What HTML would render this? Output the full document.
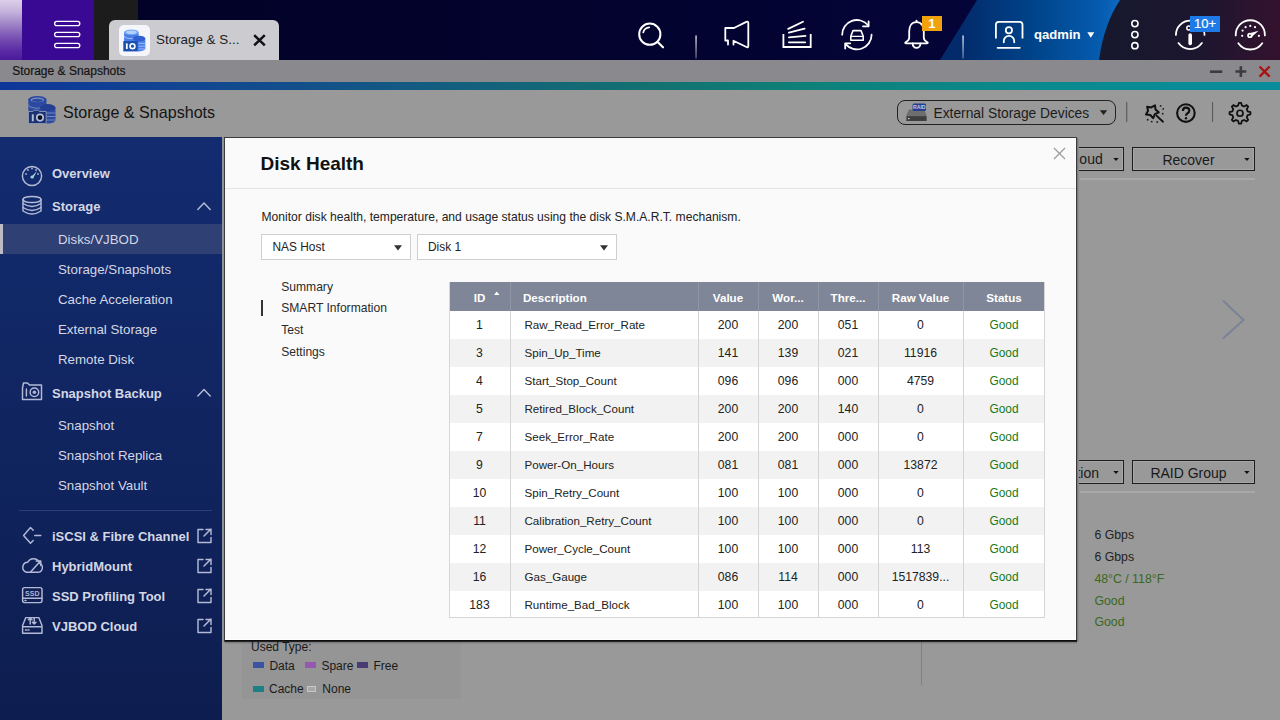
<!DOCTYPE html>
<html><head><meta charset="utf-8">
<style>
*{box-sizing:border-box;margin:0;padding:0}
html,body{width:1280px;height:720px;overflow:hidden}
body{position:relative;font-family:"Liberation Sans",sans-serif;background:#999}
.a{position:absolute;white-space:nowrap;line-height:1}
svg{position:absolute;overflow:visible}
</style></head><body>

<!-- ===== TOP BAR ===== -->
<div class="a" style="left:0;top:0;width:1280px;height:60px;background:linear-gradient(90deg,#020228 10%,#03032f 50%,#040438 75%)"></div>
<div class="a" style="left:0;top:0;width:22px;height:60px;background:linear-gradient(#dccfe8 0%,#c4b2dc 20%,#9c80c4 42%,#7a52b4 62%,#5a2aa4 85%,#4a1a9c 100%)"></div>
<div class="a" style="left:22px;top:0;width:72px;height:60px;background:#3a0994"></div>
<div class="a" style="left:94px;top:0;width:43.5px;height:60px;background:#1c1c1c"></div>
<svg style="left:0;top:0" width="1280" height="60">
  <defs>
    <linearGradient id="bb" x1="0" y1="0" x2="1" y2="0">
      <stop offset="0.1" stop-color="#032a6a"/><stop offset="0.5" stop-color="#00448a"/><stop offset="0.85" stop-color="#065cb0"/><stop offset="1" stop-color="#1272cc"/>
    </linearGradient>
    <linearGradient id="rb" x1="0" y1="0" x2="1" y2="0">
      <stop offset="0" stop-color="#16182e"/><stop offset="0.55" stop-color="#1c162e"/><stop offset="1" stop-color="#34122e"/>
    </linearGradient>
  </defs>
  <path d="M977 0 L1130 0 L1130 60 L940 60 Z" fill="url(#bb)"/>
  <path d="M1120 0 L1280 0 L1280 60 L1099 60 Q1104 24 1120 0 Z" fill="url(#rb)"/>
  <g fill="none" stroke="#fff" stroke-width="1.3">
    <rect x="54.6" y="21.4" width="25.2" height="4.3" rx="2.15"/>
    <rect x="54.6" y="32.4" width="25.2" height="4.3" rx="2.15"/>
    <rect x="54.6" y="43.4" width="25.2" height="4.3" rx="2.15"/>
  </g>
</svg>
<!-- tab -->
<div class="a" style="left:109px;top:20px;width:170px;height:40px;background:#cccbd0;border-radius:6px 6px 0 0"></div>
<div class="a" style="left:119px;top:25px;width:31px;height:31px;background:#f4f6fb;border-radius:5px"></div>
<svg style="left:0;top:0" width="300" height="60">
  <g transform="translate(123.3 29.4) scale(0.8)">
    <path d="M1 3.5 v10.5 a9.1 3.5 0 0 0 18.2 0 v-10.5 z" fill="#4a7ee6"/>
    <ellipse cx="10.1" cy="3.5" rx="9.1" ry="3.5" fill="#7aa6f6"/>
    <ellipse cx="10.1" cy="3.5" rx="6.5" ry="2.2" fill="#b4d0ff"/>
    <path d="M1 8 a9.1 3.5 0 0 0 18.2 0" fill="none" stroke="#a8c8ff" stroke-width="1.1"/>
    <path d="M12 11.5 v12.5 a7.75 3.5 0 0 0 15.5 0 v-12.5 z" fill="#4a7ee6"/>
    <ellipse cx="19.75" cy="11.5" rx="7.75" ry="3.5" fill="#2f5fd0"/>
    <path d="M19 17.5 h8.5 M19 21 h8.5 M19 24.5 h8.5" stroke="#9cc0ff" stroke-width="1.2"/>
    <rect x="0" y="14.5" width="18" height="13" fill="#1c50b0"/>
    <rect x="3.3" y="17.5" width="2.2" height="7" fill="#fff"/>
    <circle cx="11.5" cy="21" r="3" fill="none" stroke="#fff" stroke-width="2"/>
  </g>
</svg>
<div class="a" style="left:156px;top:33.2px;font-size:13.4px;color:#1e1e1e">Storage &amp; S...</div>
<svg style="left:0;top:0" width="300" height="60">
  <path d="M254.2 35.2 L264.8 45.3 M264.8 35.2 L254.2 45.3" stroke="#111" stroke-width="2.5"/>
</svg>
<svg style="left:0;top:0" width="1280" height="60">
<g fill="none" stroke="#fff" stroke-linecap="round" stroke-linejoin="round">
<circle cx="649.8" cy="34.2" r="10.6" stroke-width="2"/>
<path d="M657.6 42 L663 47.3" stroke-width="2.2"/>
<path d="M643.23 32.44 A6.80 6.80 0 0 1 649.21 27.43" stroke-width="1.7"/>
<path d="M728 44.5 V40.5 H725.3 V28 H734 L746.3 21.9 Q748.3 21.1 748.3 23.1 V45.9 Q748.3 47.9 746.4 47 L733.5 40.7 V44.5" stroke-width="1.8"/>
<path d="M783.4 34 V47 H810.7 V34" stroke-width="1.8" stroke-linecap="butt" stroke-linejoin="miter"/>
<path d="M788.9 42.3 H805.2 M788.9 37.3 L805.5 35.8 M788.9 32.7 L804.6 28.7 M788.2 28.9 L803 21.7" stroke-width="1.8"/>
<path d="M842.20 34.70 A14.70 14.70 0 0 1 868.16 25.25" stroke-width="1.8"/>
<path d="M868.6 21.4 V26.3 H863" stroke-width="1.8"/>
<path d="M871.60 34.70 A14.70 14.70 0 0 1 845.64 44.15" stroke-width="1.8"/>
<path d="M845.2 48.5 V43.3 H850.3" stroke-width="1.8"/>
<path d="M850.8 36.2 L853 30.6 H861 L863.2 36.2 V40.2 H850.8 Z" stroke-width="1.6"/>
<path d="M851 36.4 H863" stroke-width="1.4"/>
<path d="M916.5 22.2 C911.3 22.2 909.2 26.6 909.2 31 V37.8 Q909.2 40.4 905.6 42.2 Q904.6 43.3 906.2 43.3 H926.8 Q928.4 43.3 927.4 42.2 Q923.8 40.4 923.8 37.8 V31 C923.8 26.6 921.7 22.2 916.5 22.2 Z" stroke-width="1.8"/>
<path d="M912.6 43.5 A3.9 4.4 0 0 0 920.4 43.5" stroke-width="1.8"/>
<path d="M916.5 22 V20.6" stroke-width="1.8"/>
<path d="M995.9 38.5 V24.8 Q995.9 21.9 998.8 21.9 H1019.6 Q1022.5 21.9 1022.5 24.8 V38.5" stroke-width="1.8" stroke-linecap="butt"/>
<circle cx="1008.9" cy="30.3" r="3.1" stroke-width="1.8"/>
<path d="M1003.8 42.3 V41 A5.2 5.2 0 0 1 1014.2 41 V42.3" stroke-width="1.8"/>
<path d="M997.6 47.8 H1019.8" stroke-width="1.8"/>
<circle cx="1134.9" cy="23.6" r="3.1" stroke-width="1.6"/>
<circle cx="1134.9" cy="34.6" r="3.1" stroke-width="1.6"/>
<circle cx="1134.9" cy="45.7" r="3.1" stroke-width="1.6"/>
<path d="M1175.90 34.90 A14.30 14.30 0 0 1 1190.20 20.60" stroke-width="1.8"/>
<path d="M1203.64 30.01 A14.30 14.30 0 0 1 1204.50 34.90" stroke-width="1.8"/>
<path d="M1201.91 43.10 A14.30 14.30 0 0 1 1178.49 43.10" stroke-width="1.8"/>
<path d="M1190.2 35 V43.5" stroke-width="3.6"/>
<circle cx="1188.8" cy="28" r="2" stroke-width="1.5"/>
<path d="M1235.71 35.41 A14.60 14.60 0 1 1 1264.89 35.41" stroke-width="1.8"/>
<path d="M1262.26 43.27 A14.60 14.60 0 0 1 1238.34 43.27" stroke-width="1.8"/>
</g>
<g fill="#fff">
 <circle cx="1242.6" cy="30.6" r="1.1"/><circle cx="1245.6" cy="27.2" r="1.1"/><circle cx="1250.3" cy="25.9" r="1.1"/><circle cx="1255" cy="27.2" r="1.1"/><circle cx="1242.2" cy="35.8" r="1.1"/><circle cx="1258.9" cy="35.8" r="1.1"/>
 <path d="M1248.6 33.6 L1258.6 30.8 L1251.4 37.2 Z"/><circle cx="1249.9" cy="35.4" r="2.7"/>
</g>
<circle cx="1249.9" cy="35.4" r="0.9" fill="#1c162e"/>
<defs><linearGradient id="sep" x1="0" y1="0" x2="0" y2="1"><stop offset="0" stop-color="#fff" stop-opacity="0.95"/><stop offset="1" stop-color="#fff" stop-opacity="0.35"/></linearGradient></defs>
<rect x="695.4" y="35.5" width="1.3" height="23" fill="url(#sep)"/>
<rect x="962.4" y="35.5" width="1.3" height="23" fill="url(#sep)"/>
<path d="M1087.3 32.2 H1094.3 L1090.8 37.8 Z" fill="#fff"/>
</svg>
<div class="a" style="left:922px;top:16px;width:19.5px;height:15px;background:#f2a20c"></div>
<div class="a" style="left:922px;width:19.5px;text-align:center;top:17.2px;font-size:13px;font-weight:bold;color:#fff">1</div>
<div class="a" style="left:1190.2px;top:16px;width:29.6px;height:15.5px;background:#1e7ae6"></div>
<div class="a" style="left:1190.2px;width:29.6px;text-align:center;top:16.8px;font-size:13px;color:#fff;-webkit-text-stroke:0.2px #fff">10+</div>
<div class="a" style="left:1034px;top:28.3px;font-size:13.1px;font-weight:bold;color:#fff">qadmin</div>
<!-- ===== TITLE BAR ===== -->
<div class="a" style="left:0;top:60px;width:1280px;height:21.5px;background:#8a898d"></div>
<div class="a" style="left:12.2px;top:65.2px;font-size:12px;color:#141414;-webkit-text-stroke:0.2px #141414">Storage &amp; Snapshots</div>
<svg style="left:0;top:60px" width="1280" height="22">
  <path d="M1210 11.7 h12.3" stroke="#3c3c3c" stroke-width="2.6"/>
  <path d="M1235.4 11.5 h10.9 M1240.85 6.3 v10.6" stroke="#3c3c3c" stroke-width="2.6"/>
  <path d="M1259.6 6.5 l10 10.2 M1269.6 6.5 l-10 10.2" stroke="#a81414" stroke-width="2.4"/>
</svg>
<div class="a" style="left:0;top:81.5px;width:1280px;height:8.5px;background:linear-gradient(90deg,#0e369a 0%,#134e8c 22%,#137070 50%,#0e8078 62%,#0a8a8e 82%,#0a8c9c 100%)"></div>
<!-- ===== HEADER ===== -->
<div class="a" style="left:0;top:90px;width:1280px;height:47px;background:#999"></div>
<svg style="left:0;top:0" width="300" height="140">
  <g transform="translate(28 96)">
    <path d="M0.3 3.6 v10.5 a9.1 3.6 0 0 0 18.2 0 v-10.5 z" fill="#2c4aa2"/>
    <ellipse cx="9.4" cy="3.6" rx="9.1" ry="3.6" fill="#2c4aa2"/>
    <ellipse cx="9.4" cy="3.9" rx="6.6" ry="2.3" fill="#7d8fba"/>
    <ellipse cx="9.4" cy="4.3" rx="5.4" ry="1.6" fill="#2c4aa2"/>
    <path d="M0.3 8.6 a9.1 3.6 0 0 0 18.2 0" fill="none" stroke="#7d8fba" stroke-width="0.9"/>
    <path d="M12 11.6 v12.4 a7.75 3.5 0 0 0 15.5 0 v-12.4 z" fill="#2c4aa2"/>
    <ellipse cx="19.75" cy="11.6" rx="7.75" ry="3.5" fill="#243e94"/>
    <path d="M18.5 17 h9 M18.5 20.5 h9 M18.5 24 h9" stroke="#7386b6" stroke-width="1.2"/>
    <path d="M0.5 15.5 h4.5 l1.2 -1.2 h4 l1.2 1.2 h6.8 v12 h-17.7 z" fill="#1b3172" stroke="#8d98b8" stroke-width="0.9"/>
    <rect x="3.8" y="18.3" width="2" height="7" fill="#b3bdd6"/>
    <circle cx="12" cy="21.6" r="3.2" fill="#0c1020" stroke="#b3bdd6" stroke-width="1.7"/>
  </g>
</svg>
<div class="a" style="left:63px;top:103.8px;font-size:16.1px;color:#141414">Storage &amp; Snapshots</div>
<div class="a" style="left:897px;top:99.5px;width:219px;height:25.5px;border:1.8px solid #222;border-radius:8px"></div>
<svg style="left:906px;top:103px" width="21" height="19">
  <path d="M3 6.5 h15 l2.5 5.5 v6 h-20 v-6 z" fill="#6e6e6e"/>
  <rect x="0.5" y="13.2" width="20" height="4.8" fill="#3e3e3e"/>
  <rect x="2" y="15" width="1.6" height="1.2" fill="#c8c8c8"/>
  <rect x="6.5" y="0.5" width="13.5" height="7.5" rx="1.5" fill="#24408c"/>
  <text x="13.25" y="6.2" font-size="5.2" font-family="Liberation Sans" fill="#c4cce4" text-anchor="middle" font-weight="bold">RAID</text>
</svg>
<div class="a" style="left:933.5px;top:106.6px;font-size:13.8px;color:#1c1c1c">External Storage Devices</div>
<svg style="left:0;top:0" width="1280" height="140">
  <path d="M1099.8 110.2 h7.5 l-3.75 4.8 z" fill="#222"/>
  <rect x="1126.2" y="102" width="1.1" height="20" fill="#5a5a5a"/>
  <rect x="1212" y="102" width="1.1" height="20" fill="#5a5a5a"/>
  <circle cx="1185.9" cy="113.1" r="8.8" fill="none" stroke="#111" stroke-width="2.1"/>
  <path d="M1182.9 110.9 Q1182.9 107.7 1186 107.7 Q1189.3 107.7 1189.3 110.5 Q1189.3 112.3 1187.5 113.2 Q1186 114 1186 115.8" fill="none" stroke="#111" stroke-width="2.2"/>
  <circle cx="1186" cy="118.3" r="1.2" fill="#111"/>
  <path d="M1158.73 112.35 L1154.88 114.18 L1153.18 118.10 L1150.25 115.00 L1146.00 114.59 L1148.04 110.84 L1147.11 106.68 L1151.31 107.46 L1154.98 105.29 L1155.53 109.52 Z" fill="none" stroke="#111" stroke-width="2" stroke-linejoin="round"/>
  <path d="M1156.5 115.6 L1163 121.7" stroke="#111" stroke-width="1.9" stroke-linecap="round"/>
  <g fill="#222"><circle cx="1160.6" cy="105.9" r="0.95"/><circle cx="1163.2" cy="108.9" r="0.95"/><circle cx="1162.7" cy="113.8" r="0.95"/><circle cx="1147.7" cy="119.7" r="0.95"/><circle cx="1151.7" cy="121.6" r="0.95"/><circle cx="1157.3" cy="122" r="0.95"/></g>
  <path d="M1238.09 105.58 L1238.90 102.81 L1241.10 102.81 L1241.91 105.58 L1244.07 106.48 L1246.61 105.09 L1248.16 106.64 L1246.77 109.18 L1247.67 111.34 L1250.44 112.15 L1250.44 114.35 L1247.67 115.16 L1246.77 117.32 L1248.16 119.86 L1246.61 121.41 L1244.07 120.02 L1241.91 120.92 L1241.10 123.69 L1238.90 123.69 L1238.09 120.92 L1235.93 120.02 L1233.39 121.41 L1231.84 119.86 L1233.23 117.32 L1232.33 115.16 L1229.56 114.35 L1229.56 112.15 L1232.33 111.34 L1233.23 109.18 L1231.84 106.64 L1233.39 105.09 L1235.93 106.48 Z" fill="none" stroke="#111" stroke-width="1.8" stroke-linejoin="round"/>
  <circle cx="1240" cy="113.25" r="3" fill="none" stroke="#111" stroke-width="1.7"/>
</svg>
<!-- ===== SIDEBAR ===== -->
<div class="a" style="left:0;top:137px;width:222px;height:583px;background:linear-gradient(#132c70,#0d1d4f)"></div>
<div class="a" style="left:0;top:224px;width:222px;height:30px;background:#2e4074"></div>
<div class="a" style="left:0;top:224px;width:2.5px;height:30px;background:#bcbcc4"></div>

<!-- sidebar items -->
<div class="a" style="left:19px;top:510px;width:193px;height:1px;background:#2e3d7a"></div>
<svg style="left:0;top:0" width="222" height="720">
 <g fill="none" stroke="#b4bad6" stroke-width="1.45" stroke-linecap="round" stroke-linejoin="round">
  <circle cx="32" cy="176" r="9.6"/>
  <path d="M197.8 209.5 l6.2 -6.6 l6.2 6.6"/>
  <path d="M197.8 396 l6.2 -6.6 l6.2 6.6"/>
  <ellipse cx="32" cy="199.5" rx="9" ry="3"/>
  <path d="M23 199.5 v11.5 q9 6 18 0 v-11.5"/>
  <path d="M23 203.5 q9 6 18 0 M23 207.5 q9 6 18 0"/>
  <path d="M22.5 388 v11.5 h19 v-14.5 h-12 l-2 -2 h-4 z"/>
  <path d="M26.4 389 v7"/>
  <circle cx="34.4" cy="392.3" r="4.3"/>
  <path d="M33.2 530.2 L30.5 527.5 L23.6 535.4 L30.5 543.3 L33.2 540.6 M34.8 535.4 H40.8"/>
  <path d="M26.5 572.2 H37.8 A4.6 4.6 0 0 0 39.6 563.4 A6.4 6.4 0 0 0 27.8 562.2 A5.1 5.1 0 0 0 26.5 572.2 Z"/>
  <path d="M31 571.5 L40.5 561 M36.2 561 H40.8 V565.5"/>
  <rect x="22.6" y="587.6" width="19.4" height="15" rx="2"/>
  <path d="M22.6 598.2 H42 M25 600.5 h1"/>
  <path d="M22.6 625.5 L25.8 617.6 H38.8 L42 625.5 V633.2 H22.6 Z M22.6 626.8 H42"/>
  <path d="M30.2 624 V618 M28.4 619.8 L30.2 618 L32 619.8 M34.2 618 V624 M32.4 622.2 L34.2 624 L36 622.2"/>
  <path d="M25.5 630 h1 M28 630 h1"/>
  <path d="M203 529.5 h-5 v13 h13 v-5 M204 536 l7 -7 M206 529.5 h5 v5"/>
  <path d="M203 559.5 h-5 v13 h13 v-5 M204 566 l7 -7 M206 559.5 h5 v5"/>
  <path d="M203 589.5 h-5 v13 h13 v-5 M204 596 l7 -7 M206 589.5 h5 v5"/>
  <path d="M203 619.5 h-5 v13 h13 v-5 M204 626 l7 -7 M206 619.5 h5 v5"/>
 </g>
 <g fill="#aeb4d2">
  <circle cx="34.4" cy="392.3" r="1.8"/>
  <circle cx="26" cy="174" r="0.9"/><circle cx="28" cy="170" r="0.9"/><circle cx="32" cy="168.5" r="0.9"/><circle cx="36" cy="170" r="0.9"/><circle cx="38" cy="174" r="0.9"/>
  <path d="M31 177 l6 -6 l-4 7.5 z" fill="#9ed0d8"/>
  <circle cx="32" cy="177" r="1.6" fill="#9ed0d8"/>
  <text x="32.3" y="596" font-size="7" font-family="Liberation Sans" font-weight="bold" text-anchor="middle" fill="#aeb4d2">SSD</text>
 </g>
</svg>
<div class="a" style="left:52px;top:166.50px;font-size:13px;color:#d4d7e4;font-weight:bold;">Overview</div>
<div class="a" style="left:52px;top:199.80px;font-size:13px;color:#d4d7e4;font-weight:bold;">Storage</div>
<div class="a" style="left:52px;top:386.70px;font-size:13px;color:#d4d7e4;font-weight:bold;">Snapshot Backup</div>
<div class="a" style="left:58px;top:232.94px;font-size:13.3px;color:#d4d7e4;">Disks/VJBOD</div>
<div class="a" style="left:58px;top:263.24px;font-size:13.3px;color:#d4d7e4;">Storage/Snapshots</div>
<div class="a" style="left:58px;top:293.24px;font-size:13.3px;color:#d4d7e4;">Cache Acceleration</div>
<div class="a" style="left:58px;top:323.14px;font-size:13.3px;color:#d4d7e4;">External Storage</div>
<div class="a" style="left:58px;top:353.04px;font-size:13.3px;color:#d4d7e4;">Remote Disk</div>
<div class="a" style="left:58px;top:419.04px;font-size:13.3px;color:#d4d7e4;">Snapshot</div>
<div class="a" style="left:58px;top:448.94px;font-size:13.3px;color:#d4d7e4;">Snapshot Replica</div>
<div class="a" style="left:58px;top:479.04px;font-size:13.3px;color:#d4d7e4;">Snapshot Vault</div>
<div class="a" style="left:52px;top:529.70px;font-size:13px;color:#d4d7e4;font-weight:bold;">iSCSI &amp; Fibre Channel</div>
<div class="a" style="left:52px;top:560.00px;font-size:13px;color:#d4d7e4;font-weight:bold;">HybridMount</div>
<div class="a" style="left:52px;top:590.00px;font-size:13px;color:#d4d7e4;font-weight:bold;">SSD Profiling Tool</div>
<div class="a" style="left:52px;top:619.80px;font-size:13px;color:#d4d7e4;font-weight:bold;">VJBOD Cloud</div>
<!-- main bg -->
<div class="a" style="left:222px;top:137px;width:3px;height:504px;background:#8e9299;"></div>
<div class="a" style="left:1030px;top:147px;width:94px;height:24px;background:transparent;border:1.5px solid #1c1c1c;box-shadow:inset 0 0 0 1px rgba(255,255,255,0.14)"></div>
<div class="a" style="left:1132px;top:147px;width:123px;height:24px;background:transparent;border:1.5px solid #1c1c1c;box-shadow:inset 0 0 0 1px rgba(255,255,255,0.14)"></div>
<div class="a" style="left:1000px;width:102px;text-align:right;top:152.35px;font-size:14px;color:#1a1a1a">Backup to Cloud</div>
<div class="a" style="left:1132px;width:113px;text-align:center;top:152.55px;font-size:14px;color:#1a1a1a;">Recover</div>
<div class="a" style="left:1080px;top:178px;width:175px;height:2px;background:#a8a8a8;"></div>
<div class="a" style="left:1030px;top:460px;width:94px;height:24px;background:transparent;border:1.5px solid #1c1c1c;box-shadow:inset 0 0 0 1px rgba(255,255,255,0.14)"></div>
<div class="a" style="left:1132px;top:460px;width:123px;height:24px;background:transparent;border:1.5px solid #1c1c1c;box-shadow:inset 0 0 0 1px rgba(255,255,255,0.14)"></div>
<div class="a" style="left:990px;width:109px;text-align:right;top:465.55px;font-size:14px;color:#1a1a1a">Information</div>
<div class="a" style="left:1132px;width:113px;text-align:center;top:465.55px;font-size:14px;color:#1a1a1a;">RAID Group</div>
<div class="a" style="left:1080px;top:491px;width:175px;height:2px;background:#a8a8a8;"></div>
<svg style="left:0;top:0" width="1280" height="720"><path d="M1113.3 158 h5.4 l-2.7 3 z M1244.2 158 h5.4 l-2.7 3 z M1113.3 471 h5.4 l-2.7 3 z M1244.2 471 h5.4 l-2.7 3 z" fill="#111"/>
<path d="M1223 300.5 l20.5 19.5 l-20.5 18.5" fill="none" stroke="#7a8296" stroke-width="2"/></svg>
<div class="a" style="left:1094.4px;top:528.79px;font-size:12.3px;color:#1f1f1f;">6 Gbps</div>
<div class="a" style="left:1094.4px;top:550.89px;font-size:12.3px;color:#1f1f1f;">6 Gbps</div>
<div class="a" style="left:1094.4px;top:572.79px;font-size:12.3px;color:#3a6820;">48°C / 118°F</div>
<div class="a" style="left:1094.4px;top:594.79px;font-size:12.3px;color:#3a6820;">Good</div>
<div class="a" style="left:1094.4px;top:616.49px;font-size:12.3px;color:#3a6820;">Good</div>
<div class="a" style="left:921px;top:640px;width:1px;height:45px;background:#808080;"></div>
<div class="a" style="left:242px;top:630px;width:219px;height:69px;background:#959595;"></div>
<div class="a" style="left:251px;top:640.64px;font-size:12px;color:#1a1a1a;">Used Type:</div>
<div class="a" style="left:253px;top:662px;width:10.5px;height:6px;background:#3c52a2;"></div>
<div class="a" style="left:305px;top:662px;width:10.5px;height:6px;background:#9458b0;"></div>
<div class="a" style="left:357px;top:662px;width:10.5px;height:6px;background:#4a3c72;"></div>
<div class="a" style="left:253px;top:686px;width:10.5px;height:6px;background:#1e8084;"></div>
<div class="a" style="left:306.5px;top:686px;width:9.5px;height:6px;background:#b5b5b5;border:1px solid #c8c8c8;background:#a8a8a8"></div>
<div class="a" style="left:269.4px;top:659.54px;font-size:12px;color:#1a1a1a;">Data</div>
<div class="a" style="left:321.4px;top:659.54px;font-size:12px;color:#1a1a1a;">Spare</div>
<div class="a" style="left:373.5px;top:659.54px;font-size:12px;color:#1a1a1a;">Free</div>
<div class="a" style="left:269px;top:683.34px;font-size:12px;color:#1a1a1a;">Cache</div>
<div class="a" style="left:322.3px;top:683.34px;font-size:12px;color:#1a1a1a;">None</div>
<!-- dialog -->
<div class="a" style="left:224px;top:137px;width:853px;height:505px;background:#3a3a3a;"></div>
<div class="a" style="left:225px;top:641px;width:852px;height:1px;background:rgba(0,0,0,0.38);"></div>
<div class="a" style="left:225px;top:642px;width:852px;height:1px;background:rgba(0,0,0,0.18);"></div>
<div class="a" style="left:225px;top:643px;width:852px;height:1px;background:rgba(0,0,0,0.07);"></div>
<div class="a" style="left:1077px;top:138px;width:1px;height:504px;background:#7a7a7a;"></div>
<div class="a" style="left:1078px;top:138px;width:1px;height:504px;background:#8e8e8e;"></div>
<div class="a" style="left:225px;top:640px;width:852px;height:1px;background:#0e0e0e;"></div>
<div class="a" style="left:225px;top:138px;width:851px;height:502px;background:#fafafa;border:1px solid #fff;border-top:none;border-left:none"></div>
<div class="a" style="left:225px;top:188px;width:851px;height:1px;background:#e4e4e4;"></div>
<div class="a" style="left:260.5px;top:154.32px;font-size:19px;color:#111;font-weight:bold;">Disk Health</div>
<svg style="left:0;top:0" width="1280" height="720"><path d="M1054 148 l11 11 M1065 148 l-11 11" stroke="#9a9a9a" stroke-width="1.2"/></svg>
<div class="a" style="left:261.5px;top:210.56px;font-size:12.1px;color:#222;">Monitor disk health, temperature, and usage status using the disk S.M.A.R.T. mechanism.</div>
<div class="a" style="left:261px;top:234px;width:150px;height:26px;background:#fff;border:1px solid #cfcfcf"></div>
<div class="a" style="left:417px;top:234px;width:200px;height:26px;background:#fff;border:1px solid #cfcfcf"></div>
<div class="a" style="left:272.5px;top:242.33px;font-size:11.9px;color:#222;">NAS Host</div>
<div class="a" style="left:428px;top:242.33px;font-size:11.9px;color:#222;">Disk 1</div>
<svg style="left:0;top:0" width="1280" height="720"><path d="M394 245.3 h8 l-4 5.3 z M600 245.3 h8 l-4 5.3 z" fill="#333"/></svg>
<div class="a" style="left:281.2px;top:280.56px;font-size:12.1px;color:#2a2a2a;">Summary</div>
<div class="a" style="left:281.2px;top:302.26px;font-size:12.1px;color:#2a2a2a;">SMART Information</div>
<div class="a" style="left:281.2px;top:324.36px;font-size:12.1px;color:#2a2a2a;">Test</div>
<div class="a" style="left:281.2px;top:346.06px;font-size:12.1px;color:#2a2a2a;">Settings</div>
<div class="a" style="left:261px;top:300px;width:2px;height:16px;background:#333;"></div>
<div class="a" style="left:449px;top:282px;width:596px;height:336px;background:#fff;border:1px solid #d6d6d6"></div>
<div class="a" style="left:450px;top:282px;width:594px;height:29px;background:#7f8697;"></div>
<div class="a" style="left:449px;width:61px;text-align:center;top:291.68px;font-size:11.6px;color:#fff;font-weight:bold;">ID</div>
<div class="a" style="left:523px;top:291.68px;font-size:11.6px;color:#fff;font-weight:bold;">Description</div>
<div class="a" style="left:698px;width:60px;text-align:center;top:291.68px;font-size:11.6px;color:#fff;font-weight:bold;">Value</div>
<div class="a" style="left:758px;width:60px;text-align:center;top:291.68px;font-size:11.6px;color:#fff;font-weight:bold;">Wor...</div>
<div class="a" style="left:818px;width:60px;text-align:center;top:291.68px;font-size:11.6px;color:#fff;font-weight:bold;">Thre...</div>
<div class="a" style="left:878px;width:85px;text-align:center;top:291.68px;font-size:11.6px;color:#fff;font-weight:bold;">Raw Value</div>
<div class="a" style="left:963px;width:82px;text-align:center;top:291.68px;font-size:11.6px;color:#fff;font-weight:bold;">Status</div>
<div class="a" style="left:449px;width:61px;text-align:center;top:319.27px;font-size:12.2px;color:#222;">1</div>
<div class="a" style="left:524.5px;top:318.78px;font-size:11.6px;color:#222;">Raw_Read_Error_Rate</div>
<div class="a" style="left:698px;width:60px;text-align:center;top:319.27px;font-size:12.2px;color:#222;">200</div>
<div class="a" style="left:758px;width:60px;text-align:center;top:319.27px;font-size:12.2px;color:#222;">200</div>
<div class="a" style="left:818px;width:60px;text-align:center;top:319.27px;font-size:12.2px;color:#222;">051</div>
<div class="a" style="left:878px;width:85px;text-align:center;top:319.27px;font-size:12.2px;color:#222;">0</div>
<div class="a" style="left:963px;width:82px;text-align:center;top:319.53px;font-size:11.9px;color:#177a17;">Good</div>
<div class="a" style="left:450px;top:339px;width:594px;height:28px;background:#f2f2f2;"></div>
<div class="a" style="left:449px;width:61px;text-align:center;top:347.27px;font-size:12.2px;color:#222;">3</div>
<div class="a" style="left:524.5px;top:346.78px;font-size:11.6px;color:#222;">Spin_Up_Time</div>
<div class="a" style="left:698px;width:60px;text-align:center;top:347.27px;font-size:12.2px;color:#222;">141</div>
<div class="a" style="left:758px;width:60px;text-align:center;top:347.27px;font-size:12.2px;color:#222;">139</div>
<div class="a" style="left:818px;width:60px;text-align:center;top:347.27px;font-size:12.2px;color:#222;">021</div>
<div class="a" style="left:878px;width:85px;text-align:center;top:347.27px;font-size:12.2px;color:#222;">11916</div>
<div class="a" style="left:963px;width:82px;text-align:center;top:347.53px;font-size:11.9px;color:#177a17;">Good</div>
<div class="a" style="left:449px;width:61px;text-align:center;top:375.27px;font-size:12.2px;color:#222;">4</div>
<div class="a" style="left:524.5px;top:374.78px;font-size:11.6px;color:#222;">Start_Stop_Count</div>
<div class="a" style="left:698px;width:60px;text-align:center;top:375.27px;font-size:12.2px;color:#222;">096</div>
<div class="a" style="left:758px;width:60px;text-align:center;top:375.27px;font-size:12.2px;color:#222;">096</div>
<div class="a" style="left:818px;width:60px;text-align:center;top:375.27px;font-size:12.2px;color:#222;">000</div>
<div class="a" style="left:878px;width:85px;text-align:center;top:375.27px;font-size:12.2px;color:#222;">4759</div>
<div class="a" style="left:963px;width:82px;text-align:center;top:375.53px;font-size:11.9px;color:#177a17;">Good</div>
<div class="a" style="left:450px;top:395px;width:594px;height:28px;background:#f2f2f2;"></div>
<div class="a" style="left:449px;width:61px;text-align:center;top:403.27px;font-size:12.2px;color:#222;">5</div>
<div class="a" style="left:524.5px;top:402.78px;font-size:11.6px;color:#222;">Retired_Block_Count</div>
<div class="a" style="left:698px;width:60px;text-align:center;top:403.27px;font-size:12.2px;color:#222;">200</div>
<div class="a" style="left:758px;width:60px;text-align:center;top:403.27px;font-size:12.2px;color:#222;">200</div>
<div class="a" style="left:818px;width:60px;text-align:center;top:403.27px;font-size:12.2px;color:#222;">140</div>
<div class="a" style="left:878px;width:85px;text-align:center;top:403.27px;font-size:12.2px;color:#222;">0</div>
<div class="a" style="left:963px;width:82px;text-align:center;top:403.53px;font-size:11.9px;color:#177a17;">Good</div>
<div class="a" style="left:449px;width:61px;text-align:center;top:431.27px;font-size:12.2px;color:#222;">7</div>
<div class="a" style="left:524.5px;top:430.78px;font-size:11.6px;color:#222;">Seek_Error_Rate</div>
<div class="a" style="left:698px;width:60px;text-align:center;top:431.27px;font-size:12.2px;color:#222;">200</div>
<div class="a" style="left:758px;width:60px;text-align:center;top:431.27px;font-size:12.2px;color:#222;">200</div>
<div class="a" style="left:818px;width:60px;text-align:center;top:431.27px;font-size:12.2px;color:#222;">000</div>
<div class="a" style="left:878px;width:85px;text-align:center;top:431.27px;font-size:12.2px;color:#222;">0</div>
<div class="a" style="left:963px;width:82px;text-align:center;top:431.53px;font-size:11.9px;color:#177a17;">Good</div>
<div class="a" style="left:450px;top:451px;width:594px;height:28px;background:#f2f2f2;"></div>
<div class="a" style="left:449px;width:61px;text-align:center;top:459.27px;font-size:12.2px;color:#222;">9</div>
<div class="a" style="left:524.5px;top:458.78px;font-size:11.6px;color:#222;">Power-On_Hours</div>
<div class="a" style="left:698px;width:60px;text-align:center;top:459.27px;font-size:12.2px;color:#222;">081</div>
<div class="a" style="left:758px;width:60px;text-align:center;top:459.27px;font-size:12.2px;color:#222;">081</div>
<div class="a" style="left:818px;width:60px;text-align:center;top:459.27px;font-size:12.2px;color:#222;">000</div>
<div class="a" style="left:878px;width:85px;text-align:center;top:459.27px;font-size:12.2px;color:#222;">13872</div>
<div class="a" style="left:963px;width:82px;text-align:center;top:459.53px;font-size:11.9px;color:#177a17;">Good</div>
<div class="a" style="left:449px;width:61px;text-align:center;top:487.27px;font-size:12.2px;color:#222;">10</div>
<div class="a" style="left:524.5px;top:486.78px;font-size:11.6px;color:#222;">Spin_Retry_Count</div>
<div class="a" style="left:698px;width:60px;text-align:center;top:487.27px;font-size:12.2px;color:#222;">100</div>
<div class="a" style="left:758px;width:60px;text-align:center;top:487.27px;font-size:12.2px;color:#222;">100</div>
<div class="a" style="left:818px;width:60px;text-align:center;top:487.27px;font-size:12.2px;color:#222;">000</div>
<div class="a" style="left:878px;width:85px;text-align:center;top:487.27px;font-size:12.2px;color:#222;">0</div>
<div class="a" style="left:963px;width:82px;text-align:center;top:487.53px;font-size:11.9px;color:#177a17;">Good</div>
<div class="a" style="left:450px;top:507px;width:594px;height:28px;background:#f2f2f2;"></div>
<div class="a" style="left:449px;width:61px;text-align:center;top:515.27px;font-size:12.2px;color:#222;">11</div>
<div class="a" style="left:524.5px;top:514.78px;font-size:11.6px;color:#222;">Calibration_Retry_Count</div>
<div class="a" style="left:698px;width:60px;text-align:center;top:515.27px;font-size:12.2px;color:#222;">100</div>
<div class="a" style="left:758px;width:60px;text-align:center;top:515.27px;font-size:12.2px;color:#222;">100</div>
<div class="a" style="left:818px;width:60px;text-align:center;top:515.27px;font-size:12.2px;color:#222;">000</div>
<div class="a" style="left:878px;width:85px;text-align:center;top:515.27px;font-size:12.2px;color:#222;">0</div>
<div class="a" style="left:963px;width:82px;text-align:center;top:515.53px;font-size:11.9px;color:#177a17;">Good</div>
<div class="a" style="left:449px;width:61px;text-align:center;top:543.27px;font-size:12.2px;color:#222;">12</div>
<div class="a" style="left:524.5px;top:542.78px;font-size:11.6px;color:#222;">Power_Cycle_Count</div>
<div class="a" style="left:698px;width:60px;text-align:center;top:543.27px;font-size:12.2px;color:#222;">100</div>
<div class="a" style="left:758px;width:60px;text-align:center;top:543.27px;font-size:12.2px;color:#222;">100</div>
<div class="a" style="left:818px;width:60px;text-align:center;top:543.27px;font-size:12.2px;color:#222;">000</div>
<div class="a" style="left:878px;width:85px;text-align:center;top:543.27px;font-size:12.2px;color:#222;">113</div>
<div class="a" style="left:963px;width:82px;text-align:center;top:543.53px;font-size:11.9px;color:#177a17;">Good</div>
<div class="a" style="left:450px;top:563px;width:594px;height:28px;background:#f2f2f2;"></div>
<div class="a" style="left:449px;width:61px;text-align:center;top:571.27px;font-size:12.2px;color:#222;">16</div>
<div class="a" style="left:524.5px;top:570.78px;font-size:11.6px;color:#222;">Gas_Gauge</div>
<div class="a" style="left:698px;width:60px;text-align:center;top:571.27px;font-size:12.2px;color:#222;">086</div>
<div class="a" style="left:758px;width:60px;text-align:center;top:571.27px;font-size:12.2px;color:#222;">114</div>
<div class="a" style="left:818px;width:60px;text-align:center;top:571.27px;font-size:12.2px;color:#222;">000</div>
<div class="a" style="left:878px;width:85px;text-align:center;top:571.27px;font-size:12.2px;color:#222;">1517839...</div>
<div class="a" style="left:963px;width:82px;text-align:center;top:571.53px;font-size:11.9px;color:#177a17;">Good</div>
<div class="a" style="left:449px;width:61px;text-align:center;top:599.27px;font-size:12.2px;color:#222;">183</div>
<div class="a" style="left:524.5px;top:598.78px;font-size:11.6px;color:#222;">Runtime_Bad_Block</div>
<div class="a" style="left:698px;width:60px;text-align:center;top:599.27px;font-size:12.2px;color:#222;">100</div>
<div class="a" style="left:758px;width:60px;text-align:center;top:599.27px;font-size:12.2px;color:#222;">100</div>
<div class="a" style="left:818px;width:60px;text-align:center;top:599.27px;font-size:12.2px;color:#222;">000</div>
<div class="a" style="left:878px;width:85px;text-align:center;top:599.27px;font-size:12.2px;color:#222;">0</div>
<div class="a" style="left:963px;width:82px;text-align:center;top:599.53px;font-size:11.9px;color:#177a17;">Good</div>
<div class="a" style="left:510px;top:311px;width:1px;height:306px;background:#d4d4d4;"></div>
<div class="a" style="left:510px;top:282px;width:1px;height:29px;background:#8f96a6;"></div>
<div class="a" style="left:698px;top:311px;width:1px;height:306px;background:#d4d4d4;"></div>
<div class="a" style="left:698px;top:282px;width:1px;height:29px;background:#8f96a6;"></div>
<div class="a" style="left:758px;top:311px;width:1px;height:306px;background:#d4d4d4;"></div>
<div class="a" style="left:758px;top:282px;width:1px;height:29px;background:#8f96a6;"></div>
<div class="a" style="left:818px;top:311px;width:1px;height:306px;background:#d4d4d4;"></div>
<div class="a" style="left:818px;top:282px;width:1px;height:29px;background:#8f96a6;"></div>
<div class="a" style="left:878px;top:311px;width:1px;height:306px;background:#d4d4d4;"></div>
<div class="a" style="left:878px;top:282px;width:1px;height:29px;background:#8f96a6;"></div>
<div class="a" style="left:963px;top:311px;width:1px;height:306px;background:#d4d4d4;"></div>
<div class="a" style="left:963px;top:282px;width:1px;height:29px;background:#8f96a6;"></div>
<svg style="left:0;top:0" width="1280" height="720"><path d="M494 295 l2.75 -3.5 l2.75 3.5 z" fill="#fff"/></svg>
</body></html>
